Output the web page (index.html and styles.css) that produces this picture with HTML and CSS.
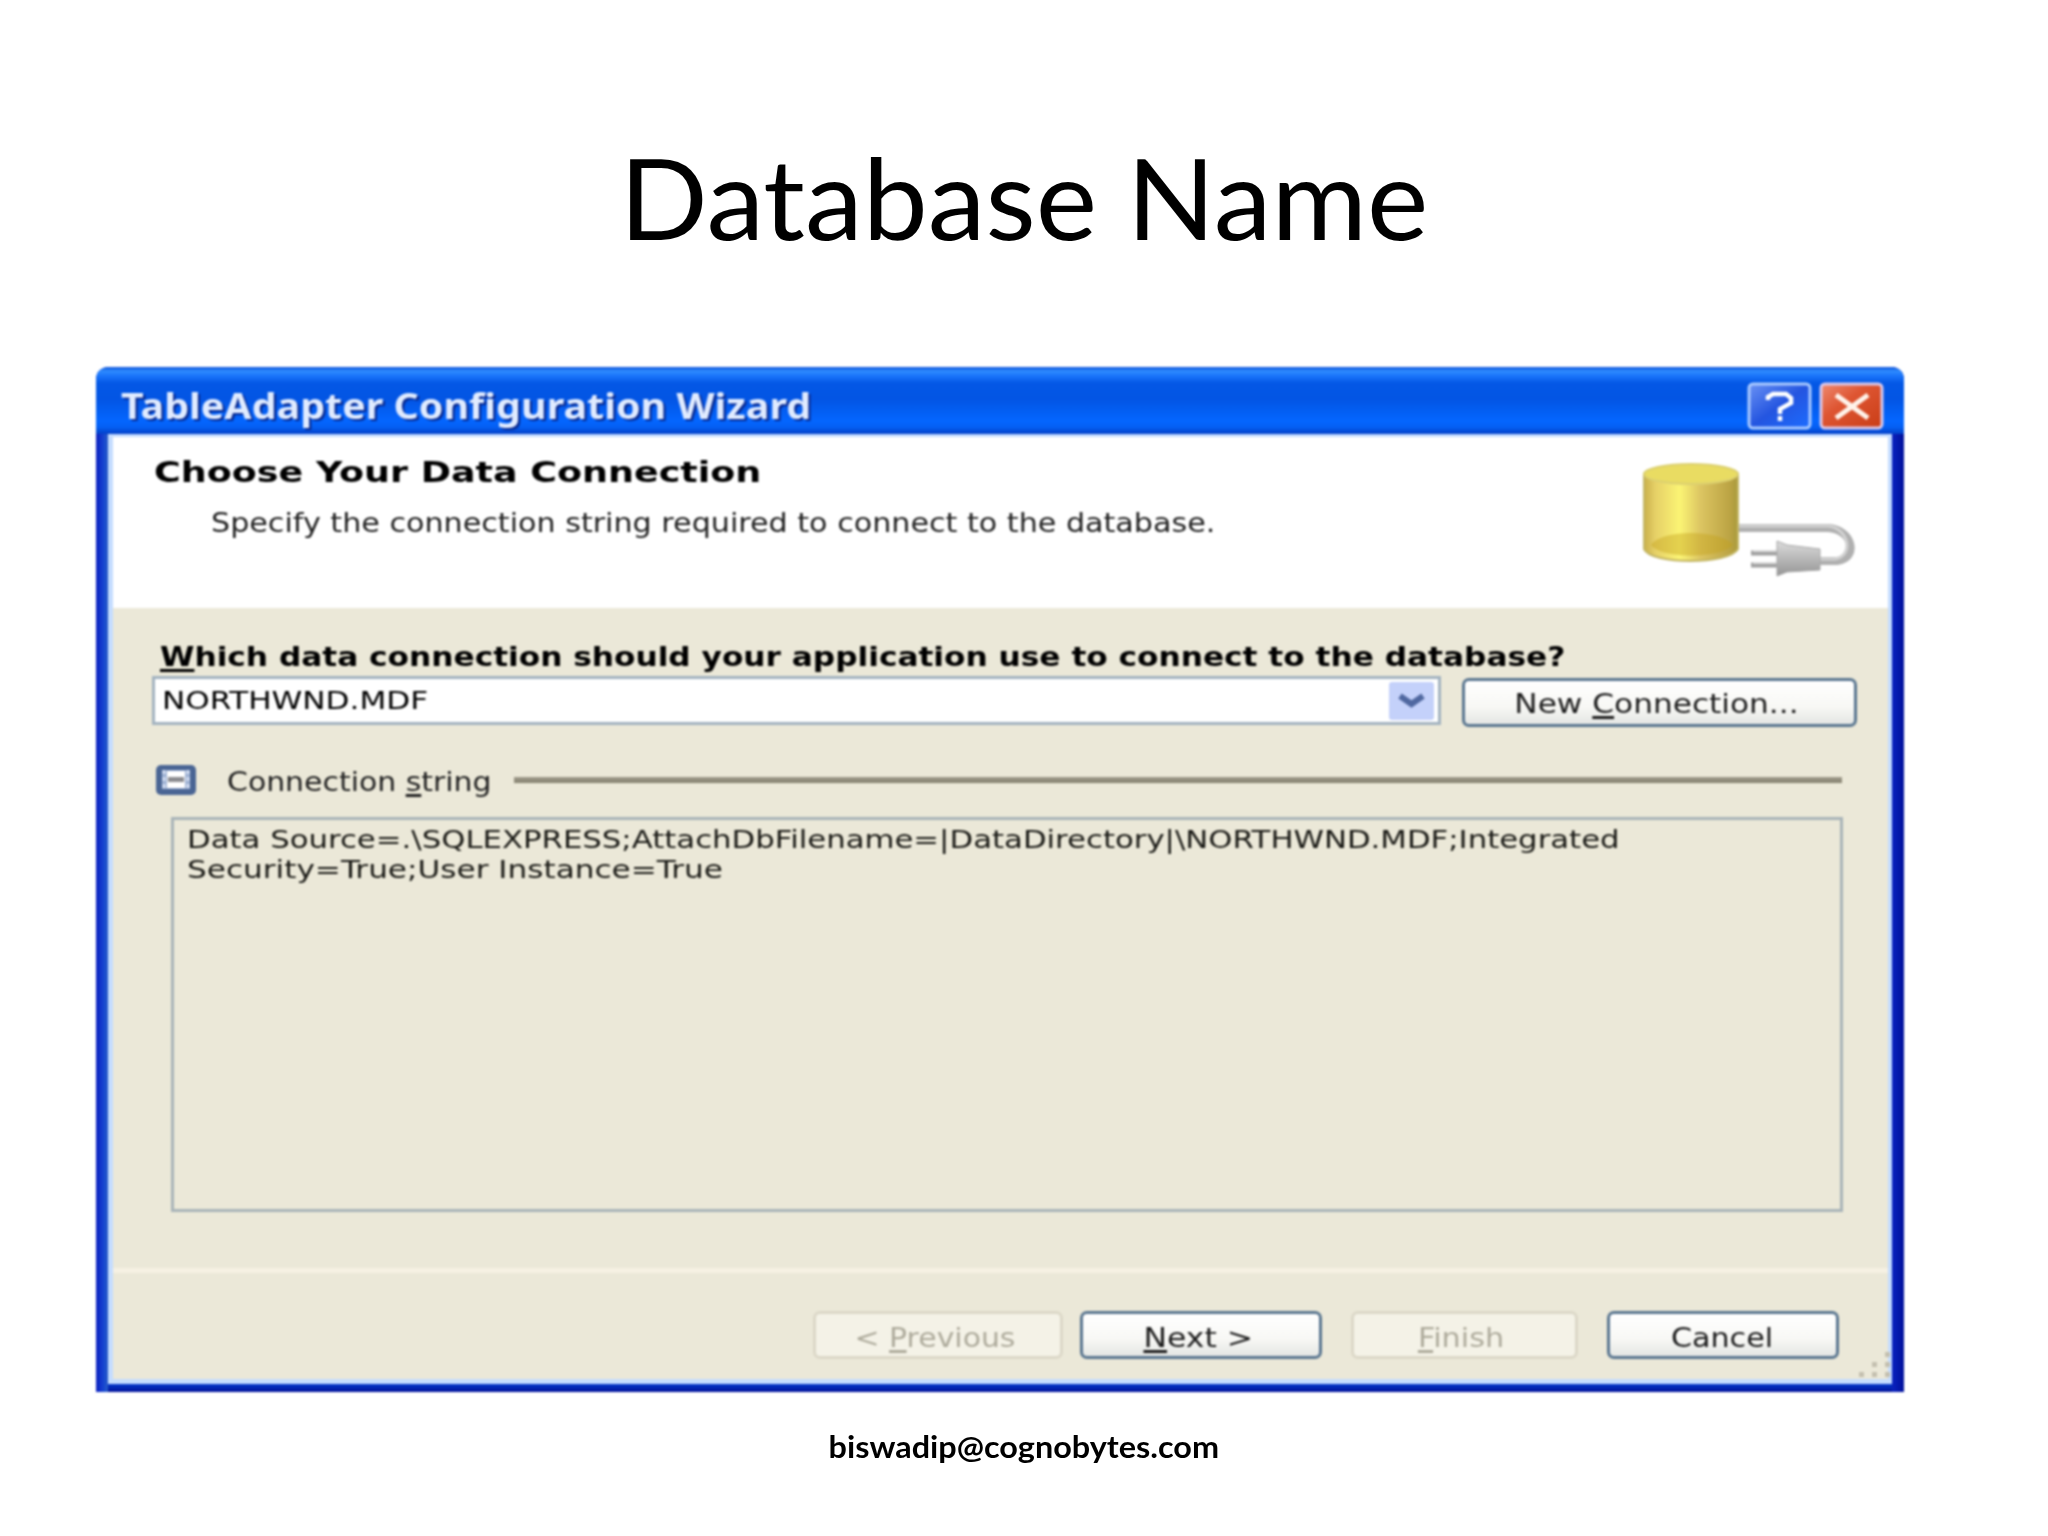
FILE: index.html
```html
<!DOCTYPE html>
<html lang="en">
<head>
<meta charset="utf-8">
<title>Database Name</title>
<link rel="stylesheet" href="styles.css">
</head>
<body>
<main class="slide">
  <h1 class="heading"><span class="t t-heading">Database Name</span></h1>
  <section class="window">
    <header class="titlebar">
      <span class="t t-title">TableAdapter Configuration Wizard</span>
      <div class="controls">
        <svg class="ctl" viewBox="0 0 65 48"><defs><linearGradient id="hb" x1="0" y1="0" x2="1" y2="1"><stop offset="0" stop-color="#6a92f4"/><stop offset=".5" stop-color="#2455e0"/><stop offset="1" stop-color="#1c6cff"/></linearGradient></defs><rect x="2" y="2" width="61" height="44" rx="4" fill="url(#hb)" stroke="#a9c9ff" stroke-width="3"/><path d="M21 18v-3l5-3h13l5 4v5l-11 6v5M33 34v5" fill="none" stroke="#fff" stroke-width="4.500"/></svg>
        <svg class="ctl" viewBox="0 0 65 48"><defs><linearGradient id="cb" x1="0" y1="0" x2="1" y2="1"><stop offset="0" stop-color="#ee8a70"/><stop offset=".4" stop-color="#de5532"/><stop offset="1" stop-color="#c93d16"/></linearGradient></defs><rect x="2" y="2" width="61" height="44" rx="4" fill="url(#cb)" stroke="#d9c8ea" stroke-width="3"/><path d="M17 13L49 36M49 13L17 36" fill="none" stroke="#fff3ea" stroke-width="5"/></svg>
      </div>
    </header>
    <div class="client">
      <div class="intro">
        <div class="intro-text">
          <div class="line40"><span class="t t-choose">Choose Your Data Connection</span></div>
          <div class="line40 sub"><span class="t t-specify">Specify the connection string required to connect to the database.</span></div>
        </div>
        <svg class="db" viewBox="0 0 220 120">
          <defs>
            <linearGradient id="cyl" x1="0" x2="1" y1="0" y2="0"><stop offset="0" stop-color="#c9b04a"/><stop offset=".12" stop-color="#e6d067"/><stop offset=".38" stop-color="#fbf474"/><stop offset=".6" stop-color="#dcc562"/><stop offset=".9" stop-color="#bda545"/><stop offset="1" stop-color="#a99a3c"/></linearGradient>
            <linearGradient id="plug" x1="0" x2="0" y1="0" y2="1"><stop offset="0" stop-color="#dcdcdc"/><stop offset="1" stop-color="#959595"/></linearGradient>
          </defs>
          <path d="M96 67H188C212 68 220 97 197 100H176" fill="none" stroke="#b0b0b0" stroke-width="8"/>
          <path d="M96 65H188C208 67 215 94 195 98H176" fill="none" stroke="#d2d2d2" stroke-width="3"/>
          <path d="M4 12V88C11 104 89 104 98 88V12Z" fill="url(#cyl)"/>
          <path d="M11 84C21 68 81 68 93 84C81 98 21 98 11 84Z" fill="#c3a017" opacity=".4"/>
          <path d="M4 12V88C11 104 89 104 98 88V12" fill="none" stroke="#c4b766" stroke-width="2"/>
          <ellipse cx="51" cy="13" rx="47" ry="10" fill="#e9dc62" stroke="#dcd070" stroke-width="2"/>
          <path d="M111 92H137M111 104H137" stroke="#a0a0a0" stroke-width="5"/><path d="M113 90H137M113 102H137" stroke="#dadada" stroke-width="2"/>
          <path d="M137 80L147 84L180 88V109L147 111L137 115Z" fill="url(#plug)" stroke="#a8a8a8"/>
        </svg>
      </div>
      <div class="body">
        <label class="question"><span class="t t-which"><u>W</u>hich data connection should your application use to connect to the database?</span></label>
        <div class="pick">
          <div class="combo"><span class="t t-north">NORTHWND.MDF</span>
            <svg class="arrow" viewBox="0 0 45 38"><rect width="45" height="38" rx="3" fill="#c4d1fa"/><path d="M11 14L22.500 22L34 14" fill="none" stroke="#5068a0" stroke-width="6"/></svg>
          </div>
          <button class="btn btn-new"><span class="t t-new">New <u>C</u>onnection...</span></button>
        </div>
        <div class="conn">
          <svg class="toggle" viewBox="0 0 40 30"><rect x="0" y="0" width="40" height="30" rx="5" fill="#4a6594"/><rect x="6" y="5" width="28" height="19" fill="#9db0d2"/><path d="M8 5v19M32 5v19" stroke="#d3def2" stroke-width="3" stroke-dasharray="4 3"/><rect x="11" y="6" width="18" height="17" fill="#fff"/><rect x="12" y="12" width="16" height="5" fill="#8b8b90"/></svg>
          <div class="conn-label"><span class="t t-conn">Connection <u>s</u>tring</span></div>
          <div class="rule"></div>
        </div>
        <div class="string">
          <span class="t t-s1">Data Source=.\SQLEXPRESS;AttachDbFilename=|DataDirectory|\NORTHWND.MDF;Integrated</span><br>
          <span class="t t-s2">Security=True;User Instance=True</span>
        </div>
      </div>
      <footer class="footer">
        <button class="btn b1 off"><span class="t t-prev">&lt; <u>P</u>revious</span></button>
        <button class="btn b2"><span class="t t-next"><u>N</u>ext &gt;</span></button>
        <button class="btn b3 off"><span class="t t-finish"><u>F</u>inish</span></button>
        <button class="btn b4"><span class="t t-cancel">Cancel</span></button>
      </footer>
      <svg class="grip" viewBox="0 0 36 28"><path d="M30 -2h5v5h-5zM17 8h5v5h-5zM30 8h5v5h-5zM4 18h5v5h-5zM17 18h5v5h-5zM30 18h5v5h-5z" fill="#c4c0b0"/></svg>
    </div>
  </section>
  <p class="mail"><span class="t t-mail">biswadip@cognobytes.com</span></p>
</main>
</body>
</html>
```
FILE: styles.css
```css
* { box-sizing: border-box; }
body { margin: 0; background: #fff; color: #000; }
.slide { width: 2048px; height: 1536px; overflow: hidden; }

/* Wide lettering: each label carries its own horizontal stretch */
.t { display: inline-block; white-space: nowrap; transform-origin: 0 50%; }
.heading .t, .btn .t, .mail .t { transform-origin: 50% 50%; }
.t-heading { transform: scaleX(1.037); }
.t-title { transform: scaleX(1.126); }
.t-choose { transform: scaleX(1.302); }
.t-specify { transform: scaleX(1.16); }
.t-which { transform: scaleX(1.2); }
.t-north { transform: scaleX(1.245); }
.t-new { transform: scaleX(1.2); }
.t-conn { transform: scaleX(1.15); }
.t-s1 { transform: scaleX(1.281); }
.t-s2 { transform: scaleX(1.297); }
.t-prev { transform: scaleX(1.15); }
.t-next { transform: scaleX(1.21); }
.t-finish { transform: scaleX(1.165); }
.t-cancel { transform: scaleX(1.16); }
.t-mail { transform: scaleX(1.08); }

.heading { margin: 0; height: 367px; padding-top: 131px; text-align: center; font: 400 112px/132px Lato, sans-serif; }
.window { position: relative; width: 1808px; height: 1025px; margin-left: 96px; padding: 0 12px 8px; border-radius: 12px 12px 0 0; background: linear-gradient(90deg, #0a1fc0 0, #1747d2 8px, #2a5cc4 12px, transparent 12px, transparent 1796px, #0a22c0 1796px, #00109a 1808px), linear-gradient(#0a3ad8 1016px, #0434c4 1018px, #00109a 1025px); font-family: "DejaVu Sans", sans-serif; filter: blur(0.8px); }
.titlebar { height: 67px; margin: 0 -12px; padding: 10px 20px 0 25px; display: flex; align-items: center; justify-content: space-between; border-radius: 12px 12px 0 0; background: linear-gradient(#0a50d8 0, #2f8cff 4px, #1a74fa 9px, #0458e6 16px, #0355e4 32px, #0466ff 54px, #0460f4 60px, #0340c8 67px); color: #e0ebff; }
.t-title { font: 700 35px/48px "Noto Sans", sans-serif; text-shadow: 2px 2px 1px #0a2a90; }
.controls { display: flex; gap: 7px; }
.ctl { width: 65px; height: 48px; }
.client { position: relative; height: 950px; background: #ebe8d8; border: solid #c4dcff; border-width: 3px 4px 5px 5px; }
.intro { height: 171px; display: flex; justify-content: space-between; background: #fff; padding: 16px 28px 0 41px; }
.line40 { height: 40px; line-height: 40px; }
.sub { margin: 10px 0 0 57px; }
.t-choose { font-size: 28px; font-weight: 700; }
.t-specify { font-size: 26px; color: #222; }
.db { width: 220px; height: 120px; margin-top: 8px; }
.body { height: 660px; padding: 30px 31px 0 39px; }
.question { display: block; height: 38px; line-height: 38px; padding-left: 8px; font-size: 26px; font-weight: 700; }
u { text-decoration-thickness: 3px; text-underline-offset: 3px; text-decoration-skip-ink: none; }
.pick { display: flex; justify-content: space-between; height: 51px; }
.combo { width: 1289px; height: 49px; display: flex; align-items: center; justify-content: space-between; padding: 0 4px 0 7px; border: 3px solid #a3b3c0; background: #fff; font-size: 25px; }
.arrow { width: 45px; height: 38px; }
.btn { font: 26px/36px "DejaVu Sans", sans-serif; height: 48px; padding: 6px 6px 0 0; color: #1c1c1c; border: 3px solid #5a7690; border-radius: 7px; background: linear-gradient(#fff, #f8f8f5 60%, #e4e6e4); }
.btn-new { width: 395px; height: 49px; margin-top: 2px; padding: 2px 7px 0 0; }
.conn { height: 40px; margin-top: 33px; display: flex; align-items: center; padding: 0 15px 0 4px; }
.toggle { width: 40px; height: 30px; }
.conn-label { width: 285px; margin-left: 31px; padding-top: 3px; font-size: 26px; color: #222; }
.rule { flex: 1; height: 6px; background: linear-gradient(#a09c8d, #85816f); margin-left: 2px; }
.string { height: 395px; margin: 17px 14px 0 19px; padding: 5px 13px; border: 3px solid #a9b4b8; font-size: 24px; line-height: 30px; color: #1a1a16; }
.footer { height: 111px; border-top: 5px solid #f6f1e3; padding: 38px 49px 0 0; display: flex; justify-content: flex-end; }
.b1 { width: 250px; margin-right: 17px; }
.b2 { width: 242px; margin-right: 29px; }
.b3 { width: 227px; margin-right: 29px; }
.b4 { width: 232px; padding-right: 2px; }
.off { color: #aeab9c; border-color: #dcd8c8; background: #f4f2e7; }
.grip { position: absolute; right: -3px; bottom: -3px; width: 36px; height: 28px; overflow: visible; }
.mail { margin: 0; padding-top: 36px; text-align: center; font: 700 30px/36px Lato, sans-serif; }
```
